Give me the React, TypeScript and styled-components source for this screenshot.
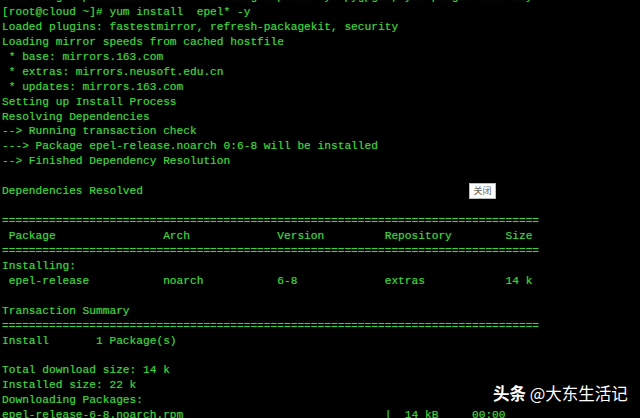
import styled, { createGlobalStyle } from "styled-components";

const GlobalStyle = createGlobalStyle`
  html, body {
    margin: 0;
    padding: 0;
    background: #000;
    overflow: hidden;
  }
`;

// lay out text pieces at fixed terminal columns
const col = (parts: [string, number][]) =>
  parts.reduce((acc, [text, at]) => acc.padEnd(at, " ") + text, "");

const RULE = "=".repeat(80);

const lines: string[] = [
  "Resolving Dependencies  --> Processing Dependency: pygpgme, yum-plugin-security",
  "[root@cloud ~]# yum install  epel* -y",
  "Loaded plugins: fastestmirror, refresh-packagekit, security",
  "Loading mirror speeds from cached hostfile",
  " * base: mirrors.163.com",
  " * extras: mirrors.neusoft.edu.cn",
  " * updates: mirrors.163.com",
  "Setting up Install Process",
  "Resolving Dependencies",
  "--> Running transaction check",
  "---> Package epel-release.noarch 0:6-8 will be installed",
  "--> Finished Dependency Resolution",
  "",
  "Dependencies Resolved",
  "",
  RULE,
  col([[" Package", 0], ["Arch", 24], ["Version", 41], ["Repository", 57], ["Size", 75]]),
  RULE,
  "Installing:",
  col([[" epel-release", 0], ["noarch", 24], ["6-8", 41], ["extras", 57], ["14 k", 75]]),
  "",
  "Transaction Summary",
  RULE,
  col([["Install", 0], ["1 Package(s)", 14]]),
  "",
  "Total download size: 14 k",
  "Installed size: 22 k",
  "Downloading Packages:",
  col([["epel-release-6-8.noarch.rpm", 0], ["|  14 kB     00:00", 57]]),
];

const App = () => {
  return (
    <Screen>
      <GlobalStyle />
      <Terminal>
        {lines.map((line, i) => (
          <Line key={i}>{line || " "}</Line>
        ))}
      </Terminal>
      <CloseButton type="button">关闭</CloseButton>
      <Watermark>
        <strong>头条</strong> @大东生活记
      </Watermark>
    </Screen>
  );
};

export default App;

const Screen = styled.div`
  position: relative;
  width: 640px;
  height: 418px;
  overflow: hidden;
  background: #000;
`;

const Terminal = styled.div`
  margin-top: -10px;
  padding-left: 2px;
  font-family: "Liberation Mono", "DejaVu Sans Mono", monospace;
  font-size: 11.2px;
  line-height: 14.95px;
  color: #3fd03f;
  text-shadow: 0 0 1px rgba(60, 200, 60, 0.6);
`;

const Line = styled.div`
  white-space: pre;
  height: 14.95px;
`;

const CloseButton = styled.button`
  position: absolute;
  left: 469px;
  top: 183px;
  width: 27px;
  height: 16px;
  padding: 0;
  border: 1px solid #bbb;
  background: #fff;
  color: #666;
  font-family: "Noto Sans CJK SC", sans-serif;
  font-size: 9px;
  line-height: 14px;
  text-align: center;
`;

const Watermark = styled.div`
  position: absolute;
  left: 493px;
  top: 382px;
  color: #fff;
  font-family: "Noto Sans CJK SC", sans-serif;
  font-size: 16.5px;
  line-height: 23px;
  white-space: nowrap;
  text-shadow: 0 0 2px rgba(0, 0, 0, 0.8);

  strong {
    font-weight: 700;
  }
`;
